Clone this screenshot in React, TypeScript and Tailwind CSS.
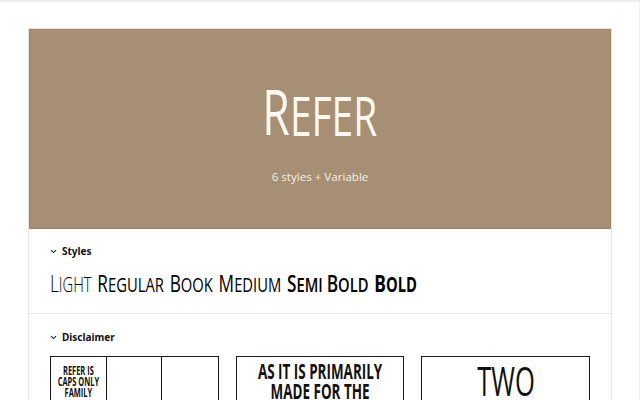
import React from "react";

const cond = {
  fontFamily: "'Open Sans', 'DejaVu Sans', sans-serif",
};

function Chevron() {
  return (
    <svg width="7" height="5" viewBox="0 0 7 5" className="shrink-0">
      <path d="M1 1.2 L3.5 3.6 L6 1.2" fill="none" stroke="#222" strokeWidth="1.1" />
    </svg>
  );
}

function SC({ word, weight }: { word: string; weight: number }) {
  return (
    <span style={{ fontWeight: weight }}>
      <span className="text-[24px]">{word[0]}</span>
      <span className="text-[20.5px]">{word.slice(1).toUpperCase()}</span>
    </span>
  );
}

export default function App() {
  return (
    <div className="w-[640px] h-[400px] overflow-hidden bg-white border-t-2 border-[#ececec] border-r border-r-[#f0f0f0]">
      <div className="pt-[26px] px-[28px]">
        <div className="w-[584px] border border-[#e6e6e6] bg-white">
          <div className="h-[200px] bg-[#a68f74] border border-[#9c8569] flex flex-col items-center">
            <div className="mt-[52px] h-[60px] flex justify-center items-end text-[#fdf9f2]" style={cond}>
              <span className="inline-flex items-end whitespace-nowrap scale-x-[0.72]">
                <span className="text-[62px] leading-none">R</span>
                <span className="text-[54px] leading-none">EFER</span>
              </span>
            </div>
            <div
              className="mt-[26px] text-[11.6px] text-[#f6efe4]"
              style={{ fontFamily: "'Open Sans', sans-serif" }}
            >
              6 styles + Variable
            </div>
          </div>

          <div className="px-[21px] pt-[15px] pb-[18px] border-b border-[#e8e8e8]">
            <div className="flex items-center gap-[5px] h-[14px]">
              <Chevron />
              <span className="text-[10px] font-bold text-[#111]" style={{ fontFamily: "'Noto Sans', sans-serif" }}>
                Styles
              </span>
            </div>
            <div className="mt-[13px] flex text-[#000] leading-none" style={cond}>
              <span className="inline-flex gap-[8px] whitespace-nowrap origin-left scale-x-[0.72]">
                <SC word="Light" weight={300} />
                <SC word="Regular" weight={400} />
                <SC word="Book" weight={450} />
                <SC word="Medium" weight={500} />
                <span style={{ fontWeight: 600 }}>
                  <span className="text-[24px]">S</span>
                  <span className="text-[20.5px]">EMI </span>
                  <span className="text-[24px]">B</span>
                  <span className="text-[20.5px]">OLD</span>
                </span>
                <SC word="Bold" weight={700} />
              </span>
            </div>
          </div>

          <div className="px-[21px] pt-[16px]">
            <div className="flex items-center gap-[5px] h-[14px]">
              <Chevron />
              <span className="text-[10px] font-bold text-[#111]" style={{ fontFamily: "'Noto Sans', sans-serif" }}>
                Disclaimer
              </span>
            </div>
            <div className="mt-[12px] grid grid-cols-3 gap-[17px]">
              <div className="h-[80px] border-[1.5px] border-[#1a1a1a] grid grid-cols-3">
                <div className="border-r-[1.5px] border-[#1a1a1a] pt-[8px] flex justify-center text-[#111]" style={cond}>
                  <span className="inline-block whitespace-nowrap text-center text-[12px] leading-[11px] font-bold scale-x-[0.62]">
                    REFER IS
                    <br />
                    CAPS ONLY
                    <br />
                    FAMILY
                  </span>
                </div>
                <div className="border-r-[1.5px] border-[#1a1a1a]" />
                <div />
              </div>
              <div className="h-[80px] border-[1.5px] border-[#1a1a1a] pt-[4px] flex justify-center text-[#111]" style={cond}>
                <span className="inline-block whitespace-nowrap text-center text-[21px] leading-[20px] font-bold scale-x-[0.64]">
                  AS IT IS PRIMARILY
                  <br />
                  MADE FOR THE
                </span>
              </div>
              <div className="h-[80px] border-[1.5px] border-[#1a1a1a] pt-[4px] flex justify-center text-[#111]" style={cond}>
                <span className="inline-block whitespace-nowrap text-[40px] leading-[40px] scale-x-[0.64]">TWO</span>
              </div>
            </div>
          </div>
        </div>
      </div>
    </div>
  );
}
